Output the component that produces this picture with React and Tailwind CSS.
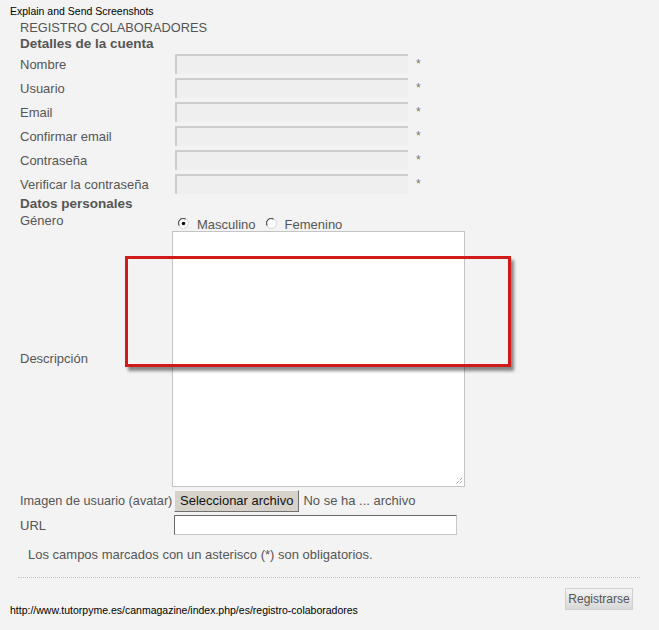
import React from 'react';

const fields = [
  'Nombre',
  'Usuario',
  'Email',
  'Confirmar email',
  'Contraseña',
  'Verificar la contraseña',
];

function Radio({ checked }) {
  return (
    <svg width="11" height="11" viewBox="0 0 11 11" className="shrink-0">
      <circle cx="5.5" cy="5.5" r="5" fill="#ffffff" stroke="#d4d4d4" />
      <path d="M1.2 7.5 A4.6 4.6 0 0 1 7.5 1.2" fill="none" stroke="#555555" strokeWidth="1.2" />
      {checked && <circle cx="5.5" cy="5.5" r="1.8" fill="#111111" />}
    </svg>
  );
}

export default function App() {
  return (
    <div
      className="relative w-[659px] h-[630px] overflow-hidden bg-[#f3f3f3] text-[#555555] text-[13px]"
      style={{ fontFamily: '"Liberation Sans", Arial, sans-serif' }}
    >
      <div className="pl-[10px] pt-[6px] h-[20px] text-[10.5px] leading-[10px] text-black">
        Explain and Send Screenshots
      </div>

      <div className="pl-[20px]">
        <div className="h-[16px] leading-[16px] text-[12.8px]">REGISTRO COLABORADORES</div>
        <div className="h-[16px] leading-[16px] font-bold text-[13.5px]">Detalles de la cuenta</div>

        {fields.map((f) => (
          <div key={f} className="flex items-center h-[24px]">
            <div className="w-[155px] leading-[16px] pt-[2px]">{f}</div>
            <div className="w-[233px] h-[20px] bg-[#efefef] border-t-2 border-l-2 border-[#cdcdcd]" />
            <div className="ml-[8px] self-start pt-[3px] text-[12px] text-[#777777]">*</div>
          </div>
        ))}

        <div className="h-[16px] leading-[16px] font-bold text-[13.5px]">Datos personales</div>

        <div className="flex h-[19px]">
          <div className="w-[155px] leading-[16px] pt-[1px]">Género</div>
          <div className="flex items-center pl-[3px] pt-[4px]">
            <Radio checked />
            <span className="ml-[8px] mr-[10px] leading-[16px] pt-[3px]">Masculino</span>
            <Radio />
            <span className="ml-[8px] leading-[16px] pt-[3px]">Femenino</span>
          </div>
        </div>

        <div className="flex items-center">
          <div className="w-[152px] leading-[16px]">Descripción</div>
          <div className="relative w-[293px] h-[256px] bg-white border border-[#c4c4c4]">
            <svg width="9" height="9" viewBox="0 0 9 9" className="absolute right-[1px] bottom-[1px]">
              <path d="M8 2 L2 8 M8 5 L5 8" stroke="#777777" strokeWidth="1" strokeDasharray="1 1" />
            </svg>
          </div>
        </div>

        <div className="flex items-center h-[26px] pt-[2px]">
          <div className="w-[154px] whitespace-nowrap leading-[16px] text-[12.7px]">Imagen de usuario (avatar)</div>
          <button className="h-[22px] px-[5px] bg-[#d6d2ca] border border-t-[#f4f4f4] border-l-[#f4f4f4] border-r-[#707070] border-b-[#707070] text-[#111111] text-[13px] leading-[16px] whitespace-nowrap">
            Seleccionar archivo
          </button>
          <span className="ml-[4px] leading-[16px] whitespace-nowrap">No se ha ... archivo</span>
        </div>

        <div className="flex items-center h-[24px]">
          <div className="w-[154px] leading-[16px] pt-[2px]">URL</div>
          <div className="w-[283px] h-[20px] bg-white border border-[#c8c8c8] border-t-[#6a6a6a] border-l-[#6a6a6a]" />
        </div>

        <div className="pl-[8px] pt-[10px] h-[40px] leading-[16px]">
          Los campos marcados con un asterisco (*) son obligatorios.
        </div>
      </div>

      <div className="ml-[18px] mr-[19px] border-t border-dotted border-[#c4c4c4]" />

      <div className="flex pl-[10px] pr-[26px] pt-[10px]">
        <div className="pt-[17px] text-[10.5px] leading-[10px] text-black whitespace-nowrap">
          http://www.tutorpyme.es/canmagazine/index.php/es/registro-colaboradores
        </div>
        <button className="ml-auto w-[68px] h-[22px] bg-gradient-to-b from-[#f4f4f4] to-[#d8d8d8] border border-[#d0d0d0] text-[#555555] text-[12px] leading-[16px]">
          Registrarse
        </button>
      </div>

      <div className="absolute left-[125px] top-[256px] w-[386px] h-[111px] border-[3px] border-[#d11a1a] shadow-[3px_4px_3px_rgba(0,0,0,0.45)]" />
    </div>
  );
}
